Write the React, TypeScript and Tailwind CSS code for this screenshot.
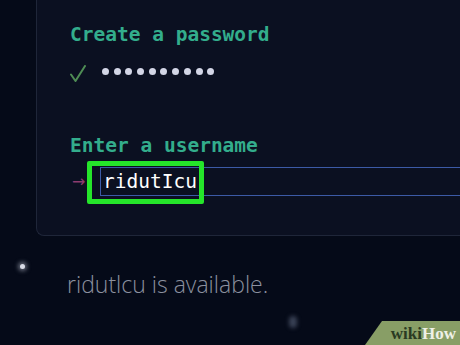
import React from "react";

const mono = { fontFamily: '"DejaVu Sans Mono", "Liberation Mono", monospace' };

export default function App() {
  return (
    <div className="relative w-[460px] h-[345px] overflow-hidden bg-[#050a18]">
      <div className="ml-[36px] h-[236px] rounded-bl-[8px] border-l border-b border-[#1f2639] bg-[#0b1021] pl-[33px] pt-[23px]">
        <div style={mono} className="text-[19.5px] leading-[24px] font-bold text-[#33ad8c]">
          Create a password
        </div>
        <div className="mt-[12px] flex items-center h-[24px]">
          <svg width="16" height="17" viewBox="0 0 16 17" className="mt-[4px]">
            <path d="M1 9.5 L5.5 16 L15 1" fill="none" stroke="#4f8d55" strokeWidth="2" strokeLinecap="round" strokeLinejoin="round" />
          </svg>
          <div className="ml-[16px] flex gap-[4.7px]">
            {Array.from({ length: 10 }).map((_, i) => (
              <span key={i} className="w-[7px] h-[7px] rounded-full bg-[#d3d6e6]" />
            ))}
          </div>
        </div>
        <div style={mono} className="mt-[51px] text-[19.5px] leading-[24px] font-bold text-[#33ad8c]">
          Enter a username
        </div>
        <div className="relative mt-[9px] flex items-center">
          <span className="w-[30px] text-[16px] leading-none text-[#8e3b6e] pl-[2px]" style={{ fontFamily: '"DejaVu Sans", sans-serif' }}>→</span>
          <div className="flex-1 h-[29px] border-y border-l border-[#3c5aa6] flex items-center pl-[2px]">
            <span style={mono} className="text-[19.5px] leading-[24px] text-white">ridutIcu</span>
          </div>
          <div className="absolute left-[17px] top-[-6px] w-[117px] h-[43px] border-[5px] border-[#25e52a] rounded-[2px]" />
        </div>
      </div>
      <div className="absolute left-[20px] top-[264px] w-[5px] h-[5px] rounded-full bg-[#d8dbe6] shadow-[0_0_4px_2px_rgba(200,205,220,0.5)]" />
      <div className="absolute left-[289px] top-[316px] w-[8px] h-[12px] rounded-full bg-[#3a4256] blur-[2px]" />
      <div className="pl-[67px] pt-[34px]">
        <span className="text-[23px] leading-[28px] font-light text-[#8b909f]" style={{ fontFamily: '"Open Sans", Lato, sans-serif' }}>
          ridutlcu is available.
        </span>
      </div>
      <div
        className="absolute right-0 bottom-0 w-[95px] h-[24px] bg-[#889e66] flex items-center justify-end pr-[4px]"
        style={{ clipPath: "polygon(17px 0, 100% 0, 100% 100%, 0 100%)" }}
      >
        <span className="text-[17px] font-bold leading-none" style={{ fontFamily: '"Liberation Serif", serif' }}>
          <span className="text-[#2a3a22]">wiki</span>
          <span className="text-[#eef0e6]">How</span>
        </span>
      </div>
    </div>
  );
}
